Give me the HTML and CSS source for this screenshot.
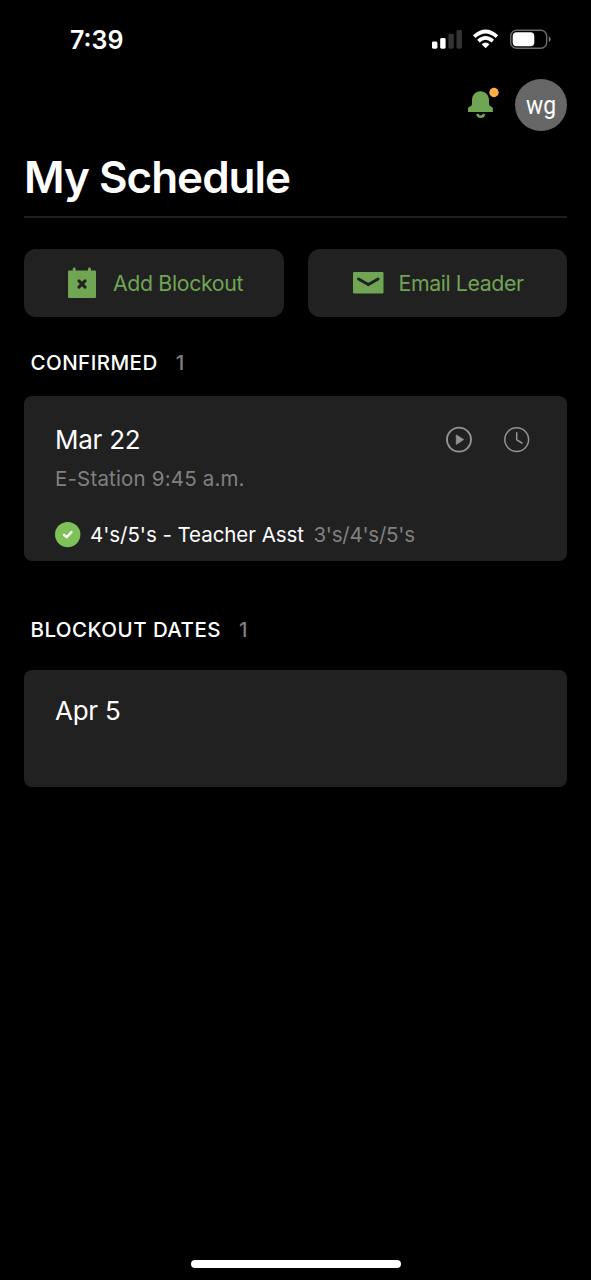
FILE: index.html
```html
<!DOCTYPE html>
<html lang="en">
<head>
<meta charset="utf-8">
<title>My Schedule</title>
<link rel="stylesheet" href="styles.css">
</head>
<body>
<div class="screen">
  <div class="status-bar">
    <span class="time">7:39</span>
    <svg class="status-icons" width="120" height="22" viewBox="0 0 120 22">
      <g fill="#fff">
        <rect x="0" y="12.5" width="5.4" height="7.2" rx="1.4"/>
        <rect x="8.2" y="9" width="5.4" height="10.7" rx="1.4"/>
      </g>
      <g fill="#333">
        <rect x="16.4" y="4.8" width="5.4" height="14.9" rx="1.4"/>
        <rect x="24.5" y="1" width="5.4" height="18.7" rx="1.4"/>
      </g>
      <g fill="none" stroke="#fff" stroke-width="3.7">
        <path d="M42.2 7.6 Q53.6 -2.6 65 7.6"/>
        <path d="M46.4 12.1 Q53.6 5.7 60.8 12.1"/>
      </g>
      <path fill="#fff" d="M49.7 15.2 Q53.6 12 57.5 15.2 L53.6 19.3Z"/>
      <rect x="78.7" y="1.2" width="36" height="18" rx="5.8" fill="none" stroke="#6a6a6a" stroke-width="1.4"/>
      <path d="M116.8 7.3 Q118.7 8.2 118.7 10.2 Q118.7 12.2 116.8 13.1Z" fill="#777"/>
      <rect x="80.7" y="3.2" width="21.6" height="14" rx="4" fill="#fff"/>
    </svg>
  </div>

  <header class="toolbar">
    <svg class="bell" width="32" height="34" viewBox="0 0 32 34">
      <path fill="#6fa553" d="M5 13.2 C5 7.7 8.6 4.2 13.5 4.2 C18.4 4.2 22 7.7 22 13.2 V17.2 Q22 18.4 23.2 19 L25.3 20.2 Q25.9 20.7 25.9 21.4 V24.9 H1 V21.4 Q1 20.7 1.7 20.2 L3.8 19 Q5 18.4 5 17.2Z"/>
      <path d="M10.2 27 Q11.2 29.7 13.7 29.7 Q16.2 29.7 17.2 27" fill="none" stroke="#6fa553" stroke-width="2.6"/>
      <circle cx="27" cy="5.5" r="4.7" fill="#ffad45"/>
    </svg>
    <div class="avatar"><span class="initials">wg</span></div>
  </header>

  <h1 class="title"><span class="title-text">My Schedule</span></h1>

  <div class="actions">
    <div class="action">
      <svg width="28" height="32" viewBox="0 0 28 32">
        <path fill="#6fa553" d="M1 3.6 H4.7 V1.9 Q4.7 .6 6.2 .6 Q7.7 .6 7.7 1.9 V3.6 H20 V1.9 Q20 .6 21.5 .6 Q23 .6 23 1.9 V3.6 H27 Q28 3.6 28 4.6 V30 Q28 31 27 31 H1 Q0 31 0 30 V4.6 Q0 3.6 1 3.6Z"/>
        <path d="M10.9 13.9 L17.1 20.1 M17.1 13.9 L10.9 20.1" stroke="#212121" stroke-width="3" stroke-linecap="round"/>
      </svg>
      <span class="label label-add">Add Blockout</span>
    </div>
    <div class="action action-email">
      <svg width="31" height="22" viewBox="0 0 31 22">
        <rect width="30.5" height="21.6" rx="1.3" fill="#6fa553"/>
        <path d="M5.5 7 L15.3 12.5 L25.1 7" fill="none" stroke="#212121" stroke-width="2.9" stroke-linecap="round"/>
      </svg>
      <span class="label label-email">Email Leader</span>
    </div>
  </div>

  <h2 class="section"><span class="confirmed">CONFIRMED</span><span class="count">1</span></h2>
  <div class="card card-confirmed">
    <div class="card-head">
      <span class="date date-mar">Mar 22</span>
      <div class="card-icons">
        <svg width="28" height="28" viewBox="0 0 28 28">
          <circle cx="14" cy="13.6" r="12" fill="none" stroke="#949494" stroke-width="1.9"/>
          <path d="M11.3 8.9 L18.6 13.6 L11.3 18.4Z" fill="#949494" stroke="#949494" stroke-width=".8" stroke-linejoin="round"/>
        </svg>
        <svg width="28" height="28" viewBox="0 0 28 28">
          <circle cx="13.7" cy="13.6" r="11.9" fill="none" stroke="#949494" stroke-width="1.5"/>
          <path d="M13.7 6.8 V13.8 L18.9 17" fill="none" stroke="#949494" stroke-width="1.5" stroke-linecap="round" stroke-linejoin="round"/>
        </svg>
      </div>
    </div>
    <div class="place">E-Station 9:45 a.m.</div>
    <div class="role-row">
      <svg width="26" height="26" viewBox="0 0 26 26">
        <circle cx="12.7" cy="12.6" r="12.7" fill="#7ec159"/>
        <path d="M9 12.8 L11.7 15.2 L16.4 10.1" fill="none" stroke="#fff" stroke-width="2.4" stroke-linecap="round" stroke-linejoin="round"/>
      </svg>
      <span class="role">4's/5's - Teacher Asst</span>
      <span class="team">3's/4's/5's</span>
    </div>
  </div>

  <h2 class="section section-blockout"><span class="blockout">BLOCKOUT DATES</span><span class="count">1</span></h2>
  <div class="card card-blockout"><span class="date date-apr">Apr 5</span></div>

  <div class="home-indicator"></div>
</div>
</body>
</html>
```
FILE: styles.css
```css
* { box-sizing: border-box; }
body { margin: 0; background: #000; color: #fff; font-family: Inter, "Liberation Sans", sans-serif; }
svg { display: block; flex: none; }
span { white-space: nowrap; }
.screen { width: 591px; height: 1280px; padding: 0 24px 12px; display: flex; flex-direction: column; background: #000; overflow: hidden; }
.status-bar { height: 79px; padding: 29px 15px 0 46px; display: flex; align-items: flex-start; justify-content: space-between; }
.time { font-size: 25px; line-height: 22px; font-weight: 600; }
.toolbar { height: 52px; display: flex; justify-content: flex-end; gap: 16px; }
.bell { margin-top: 8px; }
.avatar { width: 52px; height: 52px; border-radius: 50%; background: #676767; display: flex; align-items: center; justify-content: center; }
.initials { font-family: Roboto, sans-serif; font-size: 26px; line-height: 30px; transform: scaleX(.88); }
.title { margin: 0; height: 87px; padding-top: 15px; border-bottom: 2px solid #1e1e1e; font-size: 44px; line-height: 62px; font-weight: 600; letter-spacing: -1px; }
.actions { margin-top: 31px; display: grid; grid-template-columns: 1fr 1fr; gap: 24px; }
.action { height: 68px; padding-left: 44px; border-radius: 12px; background: #212121; color: #6fa553; display: flex; align-items: center; gap: 17px; }
.action-email { padding-left: 45px; gap: 15px; }
.label { font-size: 21.3px; line-height: 26px; letter-spacing: -.35px; }
.label-email { letter-spacing: -.4px; }
.section { margin: 0; height: 79px; padding: 12px 0 0 6.5px; display: flex; align-items: center; gap: 18px; font-size: 20.5px; line-height: 26px; font-weight: 550; letter-spacing: .45px; }
.count { color: #808080; }
.card { background: #212121; border-radius: 8px; padding: 0 31px; }
.card-confirmed { height: 165px; }
.card-head { padding: 29px 5px 0 0; display: flex; justify-content: space-between; align-items: center; }
.card-icons { display: flex; gap: 30px; }
.date { font-size: 26px; line-height: 30px; letter-spacing: -.25px; }
.place { margin-top: 11px; font-size: 20.5px; line-height: 26px; letter-spacing: .17px; color: #808080; }
.role-row { margin: 30px 0 0 -.5px; display: flex; align-items: center; gap: 9.5px; font-size: 20.5px; line-height: 26px; }
.role { letter-spacing: -.05px; }
.team { color: #808080; letter-spacing: -.25px; }
.section-blockout { height: 109px; padding: 28px 0 0 6.5px; }
.card-blockout { height: 117px; padding-top: 26px; }
.date-apr { display: block; }
.home-indicator { width: 210px; height: 8px; border-radius: 4px; background: #fff; margin: auto auto 0; }
```
